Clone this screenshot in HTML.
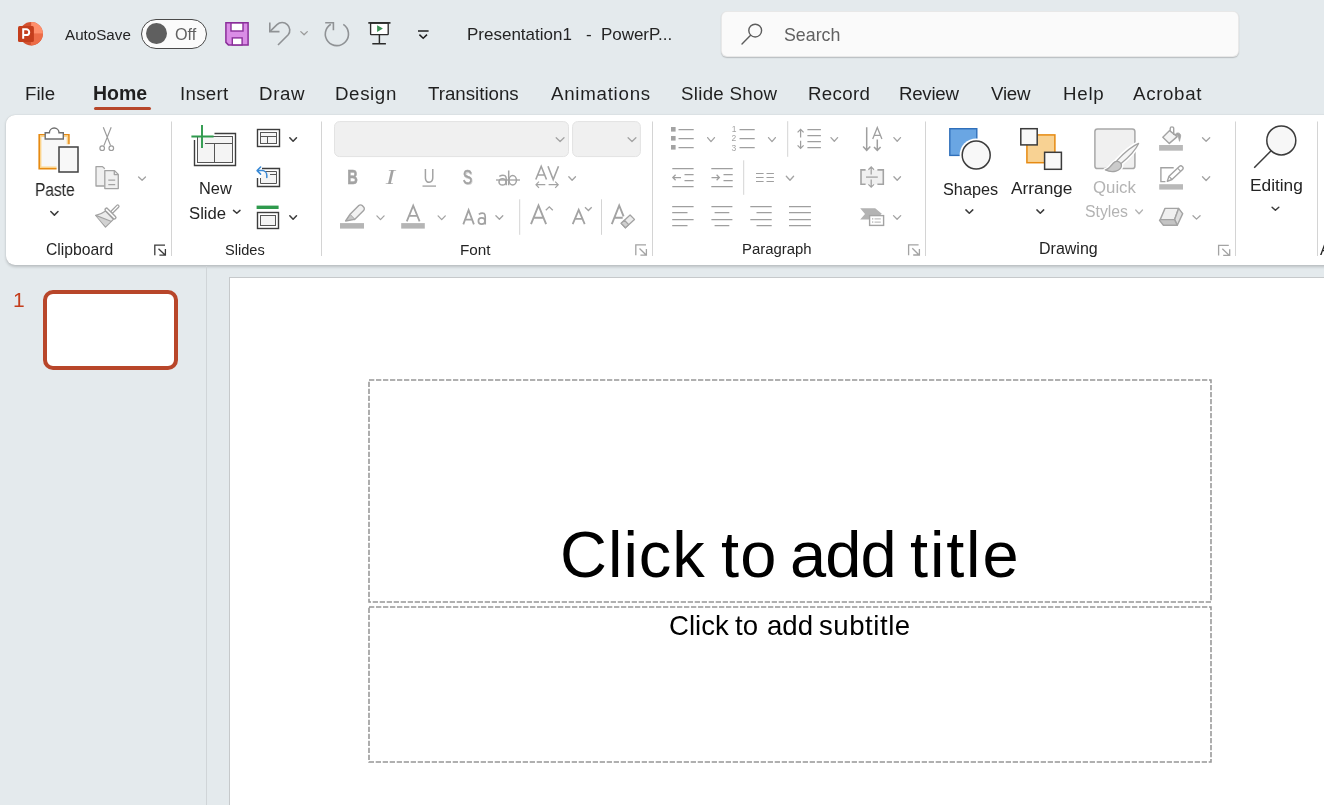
<!DOCTYPE html>
<html><head><meta charset="utf-8">
<style>
*{margin:0;padding:0;box-sizing:border-box}
html,body{width:1324px;height:805px;overflow:hidden;background:#e4eaed;font-family:"Liberation Sans",sans-serif;color:#242424}
.a{position:absolute}
.t{position:absolute;white-space:nowrap;line-height:1;will-change:transform}
svg{position:absolute;left:0;top:0;overflow:visible}
</style></head><body>
<div class="a" style="left:721px;top:11px;width:518px;height:46px;background:#fafafa;border-radius:6px;border:1px solid rgba(0,0,0,0.07);box-shadow:0 1px 1.2px rgba(0,0,0,0.2)"></div>
<div class="a" style="left:141px;top:19px;width:66px;height:29.8px;border:1px solid #4a4a4a;border-radius:15px;background:#fbfbfb"></div>
<div class="a" style="left:146px;top:23.3px;width:20.8px;height:20.8px;border-radius:50%;background:#5f5f5f"></div>
<div class="a" style="left:94px;top:107px;width:57px;height:3px;border-radius:2px;background:#b7472a"></div>
<div class="a" style="left:6px;top:115px;width:1330px;height:150px;background:#fff;border-radius:9px;box-shadow:0 1.5px 3px rgba(0,0,0,0.18),0 0 1px rgba(0,0,0,0.12)"></div>
<div class="a" style="left:206px;top:266px;width:1px;height:539px;background:#d0d5d8"></div>
<div class="a" style="left:43px;top:290px;width:134.8px;height:79.6px;border:4px solid #b8462a;border-radius:10px;background:#fff"></div>
<div class="a" style="left:229px;top:277px;width:1100px;height:540px;background:#fff;border:1px solid #c6c9cb"></div>
<svg width="1324" height="805">
<rect x="369" y="380" width="842" height="222" fill="none" stroke="#979797" stroke-width="1.55" stroke-dasharray="5.3 1.7"/>
<rect x="369" y="607" width="842" height="155" fill="none" stroke="#979797" stroke-width="1.55" stroke-dasharray="5.3 1.7"/>
</svg>
<div class="t" style="left:65px;top:26.93px;font-size:15.2px;color:#242424;">AutoSave</div>
<div class="t" style="left:175.4px;top:25.89px;font-size:16.2px;color:#616161;">Off</div>
<div class="t" style="left:467.3px;top:26.31px;font-size:17px;color:#242424;">Presentation1</div>
<div class="t" style="left:585.6px;top:26.31px;font-size:17px;color:#242424;">-</div>
<div class="t" style="left:601.4px;top:26.31px;font-size:17px;color:#242424;letter-spacing:-0.05px">PowerP...</div>
<div class="t" style="left:783.7px;top:26.83px;font-size:17.8px;color:#616161;">Search</div>
<div class="t" style="left:24.9px;top:84.87px;font-size:18.7px;color:#1f1f1f;letter-spacing:0px">File</div>
<div class="t" style="left:179.9px;top:84.87px;font-size:18.7px;color:#1f1f1f;letter-spacing:0.3px">Insert</div>
<div class="t" style="left:259.2px;top:84.87px;font-size:18.7px;color:#1f1f1f;letter-spacing:0.63px">Draw</div>
<div class="t" style="left:334.7px;top:84.87px;font-size:18.7px;color:#1f1f1f;letter-spacing:0.62px">Design</div>
<div class="t" style="left:428.2px;top:84.87px;font-size:18.7px;color:#1f1f1f;letter-spacing:0px">Transitions</div>
<div class="t" style="left:551.3px;top:84.87px;font-size:18.7px;color:#1f1f1f;letter-spacing:0.74px">Animations</div>
<div class="t" style="left:681.3px;top:84.87px;font-size:18.7px;color:#1f1f1f;letter-spacing:0.29px">Slide Show</div>
<div class="t" style="left:808.2px;top:84.87px;font-size:18.7px;color:#1f1f1f;letter-spacing:0.34px">Record</div>
<div class="t" style="left:899.3px;top:84.87px;font-size:18.7px;color:#1f1f1f;letter-spacing:-0.28px">Review</div>
<div class="t" style="left:991.4px;top:84.87px;font-size:18.7px;color:#1f1f1f;letter-spacing:-0.23px">View</div>
<div class="t" style="left:1062.6px;top:84.87px;font-size:18.7px;color:#1f1f1f;letter-spacing:0.77px">Help</div>
<div class="t" style="left:1132.7px;top:84.87px;font-size:18.7px;color:#1f1f1f;letter-spacing:0.67px">Acrobat</div>
<div class="t" style="left:93.3px;top:84.19px;font-size:19.5px;color:#1f1f1f;font-weight:bold">Home</div>
<div class="t" style="left:35.3px;top:181.70px;font-size:17.6px;color:#242424;transform:scaleX(0.88);transform-origin:0 0">Paste</div>
<div class="t" style="left:199.3px;top:180.42px;font-size:16.4px;color:#242424;">New</div>
<div class="t" style="left:188.9px;top:205.56px;font-size:16.7px;color:#242424;">Slide</div>
<div class="t" style="left:942.9px;top:180.94px;font-size:16.25px;color:#242424;">Shapes</div>
<div class="t" style="left:1010.8px;top:180.06px;font-size:17.3px;color:#242424;">Arrange</div>
<div class="t" style="left:1093px;top:180.18px;font-size:16.8px;color:#b3b3b3;">Quick</div>
<div class="t" style="left:1085px;top:204.43px;font-size:15.8px;color:#b3b3b3;">Styles</div>
<div class="t" style="left:1250px;top:176.96px;font-size:17.3px;color:#242424;">Editing</div>
<div class="t" style="left:45.5px;top:241.61px;font-size:15.7px;color:#242424;">Clipboard</div>
<div class="t" style="left:225.4px;top:242.54px;font-size:14.6px;color:#242424;">Slides</div>
<div class="t" style="left:459.6px;top:242.15px;font-size:15.3px;color:#242424;">Font</div>
<div class="t" style="left:741.6px;top:241.89px;font-size:14.9px;color:#242424;">Paragraph</div>
<div class="t" style="left:1038.6px;top:241.26px;font-size:16px;color:#242424;">Drawing</div>
<div class="t" style="left:1320px;top:242.36px;font-size:16px;color:#242424;">A</div>
<div class="t" style="left:12.6px;top:288.62px;font-size:21px;color:#c43e1c;">1</div>
<div class="t" style="left:560.4px;top:522.28px;font-size:65px;color:#000;letter-spacing:1px">Click</div>
<div class="t" style="left:720.5px;top:522.28px;font-size:65px;color:#000;letter-spacing:1.3px">to</div>
<div class="t" style="left:789.5px;top:522.28px;font-size:65px;color:#000;letter-spacing:-0.9px">add</div>
<div class="t" style="left:910px;top:522.28px;font-size:65px;color:#000;letter-spacing:1.85px">title</div>
<div class="t" style="left:669px;top:612.44px;font-size:27.6px;color:#000;">Click</div>
<div class="t" style="left:735.2px;top:612.44px;font-size:27.6px;color:#000;">to</div>
<div class="t" style="left:766.6px;top:612.44px;font-size:27.6px;color:#000;">add</div>
<div class="t" style="left:818.8px;top:612.44px;font-size:27.6px;color:#000;letter-spacing:0.54px">subtitle</div>
<svg width="1324" height="805">
<!-- PPT logo -->
<circle cx="31.2" cy="33.7" r="11.7" fill="#d35230"/>
<path d="M31.2,33.7 L31.2,22 A11.7,11.7 0 0 1 42.9,33.7 Z" fill="#ff8f6b"/>
<path d="M30.8,33.7 L42.9,33.7 A11.7,11.7 0 0 1 30.8,45.4 Z" fill="#ed6c47"/>
<rect x="18" y="26.1" width="15.9" height="15.9" rx="1.6" fill="#c43e1c"/>
<path d="M23.2,38.7 V29.3 H26.3 A2.9,2.9 0 0 1 26.3,35.1 H23.2" fill="none" stroke="#fff" stroke-width="2"/>
<!-- save -->
<path d="M225.9,22.8 H248.1 V44.9 H228.4 L225.9,42.4 Z" fill="#da8de6" stroke="#8a2f9a" stroke-width="1.5" stroke-linejoin="miter"/>
<rect x="231" y="23" width="12" height="8" fill="#fff" stroke="#8a2f9a" stroke-width="1.4"/>
<rect x="232.3" y="37.9" width="9.8" height="7" fill="#fff" stroke="#8a2f9a" stroke-width="1.4"/>
<!-- undo -->
<g fill="none" stroke="#8f9295" stroke-width="1.6" stroke-linecap="butt" stroke-linejoin="miter">
<path d="M269.8,22.5 V31.6 H279.5"/>
<path d="M270.3,31.1 L277,24.6 A7.6,7.6 0 0 1 288.2,34.8 L278,45"/>
<path d="M325.2,22.7 H333.4 V30.3"/>
<path d="M330.8,24.2 A11.6,11.6 0 1 0 343.3,24.4"/>
</g>
<!-- presenter -->
<g fill="none" stroke="#2b2b2b" stroke-width="1.35">
<rect x="370.6" y="23" width="17.6" height="11.6" fill="#fff" rx="0.6"/>
<path d="M368.3,22.9 H390.5" stroke-width="1.7"/>
<path d="M379.4,34.7 V43.7 M372.3,43.8 H385.9" stroke-width="1.45"/>
</g>
<path d="M377.1,25.3 L382.9,28.6 L377.1,32 Z" fill="#3b8f55"/>
<!-- customize -->
<g fill="none" stroke="#1f1f1f" stroke-width="1.5">
<path d="M418,31 H428.6"/>
<path d="M419.4,34.6 L423.2,38.2 L427,34.6"/>
</g>
<!-- search icon -->
<g fill="none" stroke="#5c5c5c" stroke-width="1.4" stroke-linecap="round">
<circle cx="755.2" cy="30.6" r="6.4"/>
<path d="M750.6,35.3 L742,43.9"/>
</g>
<!-- ===== Clipboard ===== -->
<rect x="39.5" y="135" width="29" height="34" fill="#f7f7f7"/>
<path d="M56.6,168.7 H39.2 V134.8 H45 M63.5,134.8 H68.9 V144.3" fill="none" stroke="#e68a12" stroke-width="1.6"/>
<path d="M56.6,167.2 H40.7 V136.3 H45 M63.5,136.3 H67.4 V144.3" fill="none" stroke="#fcd48c" stroke-width="1.4"/>
<path d="M45.2,139 V132.8 H49.4 A4.8,4.8 0 0 1 59,132.8 H63.3 V139 Z" fill="#fff" stroke="#6f6f6f" stroke-width="1.4"/>
<rect x="59" y="147" width="19" height="25" fill="#f8f8f8" stroke="#404040" stroke-width="1.5"/>
<!-- scissors -->
<g fill="none" stroke="#9c9c9c" stroke-width="1.2">
<path d="M103.3,127.2 L110.6,145.6 M111.2,127.2 L103.9,145.6"/>
<circle cx="102.2" cy="148.2" r="2.3"/>
<circle cx="111.3" cy="148.2" r="2.3"/>
</g>
<!-- copy -->
<g stroke="#a3a3a3" stroke-width="1.3" stroke-linejoin="round">
<path d="M104.5,186 H96 V166.6 H102.5 L104.8,168.8" fill="#f0f0f0"/>
<path d="M104.8,170.6 H114.5 L118.3,174.4 V188.6 H104.8 Z" fill="#f0f0f0"/>
<path d="M114.3,170.8 V174.6 H118" fill="none"/>
<path d="M108.3,180.2 H115.2 M108.3,184.6 H115.2" fill="none"/>
</g>
<!-- format painter -->
<g stroke-linecap="round" stroke-linejoin="round" fill="none">
<path d="M117.7,206.3 L112.4,211.6" stroke="#a3a3a3" stroke-width="3.8"/>
<path d="M117.7,206.3 L112.4,211.6" stroke="#fff" stroke-width="1.3"/>
<path d="M105.6,211 Q100.5,214.6 95.8,215.4 L105.5,227 L113.4,219.4 Z" fill="#ececec" stroke="#a3a3a3" stroke-width="1.3"/>
<path d="M96.8,216.6 L110.6,221.2 L105.6,226 Z" fill="#d2d2d2" stroke="none"/>
<path d="M95.8,215.4 L110.9,221.3" stroke="#a3a3a3" stroke-width="1.2"/>
<path d="M106.6,209.7 L114.4,217.5" stroke="#a3a3a3" stroke-width="4.4"/>
<path d="M106.6,209.7 L114.4,217.5" stroke="#fff" stroke-width="1.6"/>
</g>
<!-- launcher clipboard (dark) -->
<g fill="none" stroke="#3b3b3b" stroke-width="1.3">
<path d="M154.8,255.2 V245.1 H165"/>
<path d="M158.5,248.7 L165.4,255.3 M159.4,255.1 H165.4 V249.1"/>
</g>
<!-- separators -->
<g fill="#d4d4d4">
<rect x="171" y="121.5" width="1" height="134.5"/>
<rect x="321" y="121.5" width="1" height="134.5"/>
<rect x="652" y="121.5" width="1" height="134.5"/>
<rect x="925" y="121.5" width="1" height="134.5"/>
<rect x="1235" y="121.5" width="1" height="134.5"/>
<rect x="1317" y="121.5" width="1" height="134.5"/>
<rect x="519.2" y="199.3" width="1" height="35.5"/>
<rect x="601" y="199.3" width="1" height="35.5"/>
<rect x="787.2" y="121.2" width="1" height="35.6"/>
<rect x="743.2" y="160.3" width="1" height="34.5"/>
</g>
<!-- ===== Slides ===== -->
<g fill="none">
<path d="M214.5,133.5 H235.5 V165.5 H194.5 V140" stroke="#3d3d3d" stroke-width="1.4"/>
<rect x="197.5" y="136.5" width="35" height="26" fill="#f4f4f4" stroke="#555" stroke-width="1"/>
<path d="M205,143.5 H232.5 M214.5,143.5 V162.5" stroke="#555" stroke-width="1"/>
<path d="M202,125 V148 M191.4,136.5 H213.6" stroke="#2f9a4d" stroke-width="1.9"/>
</g>
<!-- layout -->
<g fill="none">
<rect x="257.5" y="129.5" width="22" height="17" stroke="#3d3d3d" stroke-width="1.4"/>
<rect x="260.5" y="132.5" width="16" height="11" fill="#f4f4f4" stroke="#555" stroke-width="1"/>
<path d="M260.5,136.5 H276.5 M267.5,136.5 V143.5" stroke="#555" stroke-width="1"/>
</g>
<!-- reset -->
<g fill="none">
<path d="M262,168.5 H279.5 V186.5 H257.5 V178" stroke="#3d3d3d" stroke-width="1.4"/>
<path d="M264.5,171.5 H276.5 V183.5 H260.5 V178" fill="#f4f4f4" stroke="#555" stroke-width="1"/>
<path d="M270,174.5 H276.5" stroke="#555" stroke-width="1"/>
<path d="M260.6,167 L257.1,170.6 L260.6,174.1 M257.4,170.6 H262.2 A4.6,4.6 0 0 1 266.8,175.2 V177.6" stroke="#3a8ad6" stroke-width="1.5" stroke-linejoin="round" stroke-linecap="round"/>
</g>
<!-- section -->
<g fill="none">
<rect x="256.6" y="205.6" width="22" height="3.4" fill="#2f9a4d"/>
<rect x="257.5" y="212.5" width="21" height="16" stroke="#3d3d3d" stroke-width="1.4"/>
<rect x="260.5" y="215.5" width="15" height="10" fill="#f4f4f4" stroke="#555" stroke-width="1"/>
</g>
<!-- ===== Font ===== -->
<rect x="334.5" y="121.6" width="234" height="35" rx="5" fill="#f0f0f0" stroke="#e3e3e3" stroke-width="1"/>
<rect x="572.6" y="121.6" width="67.8" height="35" rx="5" fill="#f0f0f0" stroke="#e3e3e3" stroke-width="1"/>
<g font-family="Liberation Sans" fill="#a3a3a3">
<text x="347.2" y="184" font-size="20.7" font-weight="bold" textLength="10.6" lengthAdjust="spacingAndGlyphs" stroke="#a3a3a3" stroke-width="0.5">B</text>
<text x="385.8" y="184" font-size="21.5" font-style="italic" font-family="Liberation Serif" textLength="9.4" lengthAdjust="spacingAndGlyphs">I</text>
<text x="423.6" y="183.1" font-size="19.4" textLength="11.2" lengthAdjust="spacingAndGlyphs">U</text>
<text x="463.6" y="185.2" font-size="20.8" font-weight="bold" fill="#d4d4d4" textLength="9.6" lengthAdjust="spacingAndGlyphs">S</text>
<text x="462.7" y="184" font-size="20.8" textLength="9.5" lengthAdjust="spacingAndGlyphs" stroke="#a3a3a3" stroke-width="0.5">S</text>
</g>
<g fill="none" stroke="#a3a3a3" stroke-width="1.35" stroke-linecap="butt" stroke-linejoin="miter">
<path d="M422.5,186.1 H436"/>
<path d="M496,180 H520"/>
<path d="M499.3,176.3 Q502.4,174.6 504.9,175.6 Q506.2,176.4 506.2,178.6 V185.3 M508.7,170.5 V185.3" stroke-width="1.5"/>
<ellipse cx="502.5" cy="181.9" rx="3.5" ry="3.2" stroke-width="1.5"/>
<ellipse cx="512.7" cy="180.3" rx="3.7" ry="4.7" stroke-width="1.5"/>
<!-- AV -->
<path d="M535.8,179.5 L541.2,166.3 L546.5,179.5 M537.7,175 H544.7 M548,166.3 L553.2,179.5 L558.5,166.3" stroke-width="1.6"/>
<path d="M536,184.7 H545.3 M539,181.6 L536,184.7 L539,187.8 M548.6,184.7 H558.2 M555.2,181.6 L558.2,184.7 L555.2,187.8" stroke-width="1.2"/>
<!-- font color A -->
<path d="M406.8,221.3 L413.2,205.6 L419.6,221.3 M408.8,215.9 H417.6" stroke-width="1.8"/>
<!-- Aa -->
<path d="M463.3,224.4 L468.6,210.1 L473.9,224.4 M465.2,219.6 H472" stroke-width="1.8"/>
<path d="M478.8,214.4 Q481.8,212.3 484.2,213.6 Q485.2,214.4 485.2,217 V224.5" stroke-width="1.7"/>
<ellipse cx="481.7" cy="221" rx="3.3" ry="3.2" stroke-width="1.7"/>
<!-- grow -->
<path d="M531,224.1 L538.5,205.5 L546.1,224.1 M533.8,217.8 H543.3" stroke-width="1.9"/>
<path d="M545.8,210.3 L549.3,206.9 L552.8,210.3" stroke-width="1.3"/>
<!-- shrink -->
<path d="M572.7,224.1 L578.7,209.8 L584.7,224.1 M574.9,218.8 H582.6" stroke-width="1.8"/>
<path d="M585,207.2 L588.4,210.5 L591.7,207.2" stroke-width="1.3"/>
<!-- clear A -->
<path d="M611.8,224.1 L619.2,205.5 L623.6,216.3 M613.9,217.8 H622.7" stroke-width="1.9"/>
</g>
<rect x="401.2" y="223.1" width="23.6" height="5.5" fill="#b5b5b5"/>
<rect x="340" y="223.1" width="24" height="5.5" fill="#b5b5b5"/>
<!-- highlighter pen -->
<g stroke="#a3a3a3" stroke-width="1.4" stroke-linejoin="round">
<path d="M349.8,214.6 L358.8,205.6 A2.4,2.4 0 0 1 362.2,205.6 L363.6,207 A2.4,2.4 0 0 1 363.6,210.4 L354.6,219.4 Z" fill="#f2f2f2"/>
<path d="M349.8,214.6 L345.6,221 L354.6,219.4" fill="#c8c8c8"/>
</g>
<!-- clear formatting eraser -->
<g stroke="#a3a3a3" stroke-width="1.3" stroke-linejoin="round">
<path d="M621.2,223.2 L630.1,215 L634.5,219.4 L625.4,227.8 Z" fill="#ececec"/>
<path d="M621.2,223.2 L624.4,220.2 L628.7,224.6 L625.4,227.8 Z" fill="#d0d0d0"/>
</g>
<!-- font launcher -->
<g fill="none" stroke="#a3a3a3" stroke-width="1.3">
<path d="M635.8,255.2 V244.9 H646"/>
<path d="M639.5,248.5 L646.4,255.3 M640.4,255.1 H646.4 V249.1"/>
</g>
<!-- ===== Paragraph ===== -->
<g fill="#a3a3a3">
<rect x="671" y="127" width="4.6" height="4.6"/>
<rect x="671" y="136" width="4.6" height="4.6"/>
<rect x="671" y="145" width="4.6" height="4.6"/>
</g>
<g font-family="Liberation Sans" fill="#a3a3a3" font-size="8.5">
<text x="731.8" y="132.4">1</text>
<text x="731.6" y="141.4">2</text>
<text x="731.6" y="150.6">3</text>
</g>
<g fill="none" stroke="#9f9f9f" stroke-width="1.25">
<path d="M678.5,129.5 H693.7 M678.5,138.5 H693.7 M678.5,147.5 H693.7"/>
<path d="M739.5,129.5 H754.7 M739.5,138.5 H754.7 M739.5,147.5 H754.7"/>
<!-- line spacing -->
<path d="M807.4,129.5 H820.9 M807.4,135.5 H820.9 M807.4,141.5 H820.9 M807.4,147.5 H820.9"/>
<path d="M800.6,129.6 V137.6 M800.6,140.8 V148.2 M797.6,132.4 L800.6,129.4 L803.6,132.4 M797.6,145.4 L800.6,148.4 L803.6,145.4"/>
<!-- text direction -->
<path d="M866.7,127.2 V150.2 M863.1,146.6 L866.7,150.3 L870.3,146.6" stroke-width="1.5"/>
<path d="M877.3,139.5 V150.2 M874,146.9 L877.3,150.3 L880.6,146.9" stroke-width="1.5"/>
<path d="M872.7,139 L877.3,127.6 L881.9,139 M874.2,135.4 H880.4" stroke-width="1.3"/>
<!-- decrease indent -->
<path d="M672.3,168.5 H693.6 M684.5,174.5 H693.6 M684.5,180.5 H693.6 M672.3,186.5 H693.6"/>
<path d="M672.8,177.5 H681 M675.6,174.7 L672.8,177.5 L675.6,180.3"/>
<!-- increase indent -->
<path d="M711.3,168.5 H732.7 M723.5,174.5 H732.7 M723.5,180.5 H732.7 M711.3,186.5 H732.7"/>
<path d="M711.5,177.5 H719.4 M716.6,174.7 L719.4,177.5 L716.6,180.3"/>
<!-- columns -->
<path d="M756,173.5 H763.6 M756,177.5 H763.6 M756,181.5 H763.6 M766.5,173.5 H773.9 M766.5,177.5 H773.9 M766.5,181.5 H773.9" stroke-width="1.2"/>
<!-- align left/center/right/justify -->
<path d="M672.2,206.5 H693.6 M672.2,212.5 H687.5 M672.2,219.5 H693.6 M672.2,225.5 H687.5"/>
<path d="M711.4,206.5 H732.4 M714.6,212.5 H729.3 M711.4,219.5 H732.4 M714.6,225.5 H729.3"/>
<path d="M750.3,206.5 H771.7 M756.5,212.5 H771.7 M750.3,219.5 H771.7 M756.5,225.5 H771.7"/>
<path d="M789,206.5 H810.9 M789,212.5 H810.9 M789,219.5 H810.9 M789,225.5 H810.9"/>
</g>
<!-- align text -->
<rect x="861" y="170" width="22" height="14.4" fill="#f0f0f0"/>
<g fill="none" stroke="#a3a3a3" stroke-width="1.6">
<path d="M865.6,169.9 H861 V184.3 H865.6 M877.4,169.9 H883.3 V184.3 H877.4"/>
<path d="M866,177.1 H877.8" stroke-width="1.3"/>
<path d="M871.2,167 V174.5 M868.4,169.8 L871.2,167 L874,169.8 M871.2,179.6 V187.2 M868.4,184.4 L871.2,187.2 L874,184.4" stroke-width="1.3"/>
</g>
<!-- smartart -->
<path d="M860.2,208.2 H875.2 L881.8,213.8 L875.2,219.6 H860.2 L865,213.9 Z" fill="#b3b3b3"/>
<rect x="869.6" y="215.6" width="14" height="9.8" fill="#fff" stroke="#a3a3a3" stroke-width="1.4"/>
<g fill="#b0b0b0">
<rect x="872" y="218.2" width="1.3" height="1.3"/><rect x="874.5" y="218.4" width="6.3" height="1"/>
<rect x="872" y="221.4" width="1.3" height="1.3"/><rect x="874.5" y="221.6" width="6.3" height="1"/>
</g>
<!-- launcher -->
<g fill="none" stroke="#a3a3a3" stroke-width="1.3">
<path d="M908.6,255.2 V244.8 H918.6"/>
<path d="M912.3,248.3 L919.3,255.2 M913.2,255 H919.4 V248.9"/>
</g>
<!-- ===== Drawing ===== -->
<!-- shapes -->
<rect x="949.8" y="128.7" width="27" height="26.7" fill="#6aa6e3" stroke="#2f6fba" stroke-width="1.4"/>
<circle cx="976.2" cy="155" r="16.6" fill="#fff"/>
<circle cx="976.2" cy="155" r="14" fill="#f8f8f8" stroke="#3b3b3b" stroke-width="1.5"/>
<!-- arrange -->
<rect x="1026.9" y="134.9" width="28" height="27.8" fill="#f8d293" stroke="#e68a12" stroke-width="1.5"/>
<rect x="1020.8" y="128.7" width="16.4" height="16.2" fill="#f8f8f8" stroke="#3b3b3b" stroke-width="1.5"/>
<rect x="1044.6" y="152.3" width="16.8" height="17" fill="#f8f8f8" stroke="#3b3b3b" stroke-width="1.5"/>
<!-- quick styles -->
<rect x="1094.9" y="129" width="40" height="39.6" rx="2.6" fill="#f0f0f0" stroke="#a8a8a8" stroke-width="1.5"/>
<path d="M1116.9,160.6 Q1129.5,147.2 1138.6,143.4 Q1134.6,152.4 1120.2,164.2 Z" fill="#fff" stroke="#fff" stroke-width="4.5" stroke-linejoin="round"/>
<path d="M1105.3,169.9 C1109.5,169.6 1111.3,163.8 1115.3,161.7 C1118.4,160.5 1121.9,162.9 1121.4,166.2 C1120.6,170.6 1113,173.7 1105.3,169.9 Z" fill="#fff" stroke="#fff" stroke-width="4" stroke-linejoin="round"/>
<path d="M1116.9,160.6 Q1129.5,147.2 1138.6,143.4 Q1134.6,152.4 1120.2,164.2 Z" fill="#f6f6f6" stroke="#a3a3a3" stroke-width="1.3" stroke-linejoin="round"/>
<path d="M1105.3,169.9 C1109.5,169.6 1111.3,163.8 1115.3,161.7 C1118.4,160.5 1121.9,162.9 1121.4,166.2 C1120.6,170.6 1113,173.7 1105.3,169.9 Z" fill="#cbcbcb" stroke="#a3a3a3" stroke-width="1.3" stroke-linejoin="round"/>
<!-- shape fill -->
<g stroke="#a3a3a3" stroke-width="1.4" stroke-linejoin="round">
<path d="M1162.8,137.2 L1169.6,130.6 L1177.2,136.6 L1169.3,143.4 Z" fill="#f4f4f4"/>
<path d="M1170.2,131 V128.6 A1.75,1.75 0 0 1 1173.7,128.6 V135" fill="none"/>
<path d="M1175,134.6 C1176.5,132.1 1180.7,132.3 1180.7,136 L1179.5,141.3 L1178.5,137.2 C1178.3,135.8 1177,135.2 1175,134.6 Z" fill="#a3a3a3" stroke-width="0.8"/>
</g>
<rect x="1159.1" y="145" width="23.8" height="5.7" fill="#b9b9b9"/>
<!-- shape outline -->
<g stroke="#a3a3a3" stroke-width="1.4" fill="none">
<path d="M1173.7,167.8 H1160.9 V181.6 H1165.4"/>
<path d="M1167.3,181.3 L1169,176.3 L1179.6,166.2 A1.6,1.6 0 0 1 1182,166.3 L1182.7,167 A1.6,1.6 0 0 1 1182.6,169.4 L1172,179.5 Z" fill="#fff" stroke-linejoin="round"/>
<path d="M1169,176.3 L1172,179.5 M1177.6,168.1 L1180.7,171.3" stroke-width="1.1"/>
</g>
<rect x="1159.2" y="184.2" width="23.8" height="5.4" fill="#b9b9b9"/>
<!-- shape effects -->
<g stroke="#a3a3a3" stroke-width="1.4" stroke-linejoin="round">
<path d="M1165,208.4 H1178.6 L1174.6,219.6 H1160.2 Z" fill="#f0f0f0"/>
<path d="M1178.6,208.4 L1182.7,213.6 L1177.3,225.2 L1174.6,219.6 Z" fill="#dedede"/>
<path d="M1160.2,219.6 H1174.6 L1177.3,225.2 H1163.4 L1159.5,220.4 Z" fill="#c4c4c4"/>
</g>
<!-- drawing launcher -->
<g fill="none" stroke="#a3a3a3" stroke-width="1.3">
<path d="M1218.6,255.4 V245.3 H1228.8"/>
<path d="M1222.3,248.7 L1229.6,255.6 M1223.2,255.4 H1229.7 V249.2"/>
</g>
<!-- editing -->
<g fill="none" stroke="#3b3b3b" stroke-width="1.5">
<circle cx="1281.3" cy="140.4" r="14.5" fill="#f7f7f7"/>
<path d="M1271.1,150.7 L1254.2,167.8"/>
</g>

<g fill="none" stroke-width="1.25" stroke-linecap="round" stroke-linejoin="round">
<path d="M300.8,31.6 L304.1,34.7 L307.3,31.6" stroke="#9a9a9a" stroke-width="1.3"/>
<path d="M50.8,211.5 L54.4,215.1 L58.0,211.5" stroke="#3b3b3b" stroke-width="1.5"/>
<path d="M138.6,177.0 L142.1,180.3 L145.5,177.0" stroke="#a3a3a3" stroke-width="1.3"/>
<path d="M289.8,137.7 L293.1,141.2 L296.5,137.7" stroke="#3b3b3b" stroke-width="1.5"/>
<path d="M233.5,210.4 L236.8,213.2 L240.0,210.4" stroke="#3b3b3b" stroke-width="1.5"/>
<path d="M289.8,215.7 L293.1,219.2 L296.5,215.7" stroke="#3b3b3b" stroke-width="1.5"/>
<path d="M556.2,137.7 L560.1,141.5 L564.0,137.7" stroke="#a3a3a3" stroke-width="1.3"/>
<path d="M628.1,137.7 L632.0,141.5 L635.9,137.7" stroke="#a3a3a3" stroke-width="1.3"/>
<path d="M568.8,176.7 L572.1,180.3 L575.5,176.7" stroke="#a3a3a3" stroke-width="1.3"/>
<path d="M376.9,215.9 L380.5,219.6 L384.1,215.9" stroke="#a3a3a3" stroke-width="1.3"/>
<path d="M438.1,215.9 L441.7,219.6 L445.3,215.9" stroke="#a3a3a3" stroke-width="1.3"/>
<path d="M495.9,215.7 L499.4,219.3 L502.8,215.7" stroke="#a3a3a3" stroke-width="1.3"/>
<path d="M707.6,137.6 L711.0,141.6 L714.5,137.6" stroke="#a3a3a3" stroke-width="1.3"/>
<path d="M768.5,137.6 L772.0,141.6 L775.4,137.6" stroke="#a3a3a3" stroke-width="1.3"/>
<path d="M831.0,137.6 L834.3,141.2 L837.6,137.6" stroke="#a3a3a3" stroke-width="1.3"/>
<path d="M893.9,137.6 L897.2,141.2 L900.5,137.6" stroke="#a3a3a3" stroke-width="1.3"/>
<path d="M786.3,176.3 L790.0,180.3 L793.6,176.3" stroke="#a3a3a3" stroke-width="1.3"/>
<path d="M893.9,176.7 L897.2,180.3 L900.5,176.7" stroke="#a3a3a3" stroke-width="1.3"/>
<path d="M893.5,215.6 L897.1,219.3 L900.7,215.6" stroke="#a3a3a3" stroke-width="1.3"/>
<path d="M965.9,209.9 L969.3,213.2 L972.8,209.9" stroke="#3b3b3b" stroke-width="1.5"/>
<path d="M1036.9,209.9 L1040.3,213.2 L1043.7,209.9" stroke="#3b3b3b" stroke-width="1.5"/>
<path d="M1135.7,210.0 L1139.1,213.8 L1142.5,210.0" stroke="#b3b3b3" stroke-width="1.3"/>
<path d="M1202.5,137.7 L1206.1,141.3 L1209.7,137.7" stroke="#a3a3a3" stroke-width="1.3"/>
<path d="M1202.5,176.7 L1206.1,180.5 L1209.7,176.7" stroke="#a3a3a3" stroke-width="1.3"/>
<path d="M1193.0,215.7 L1196.5,219.1 L1200.1,215.7" stroke="#a3a3a3" stroke-width="1.3"/>
<path d="M1272.1,207.2 L1275.4,210.2 L1278.8,207.2" stroke="#3b3b3b" stroke-width="1.5"/>
</g>
</svg>
</body></html>
